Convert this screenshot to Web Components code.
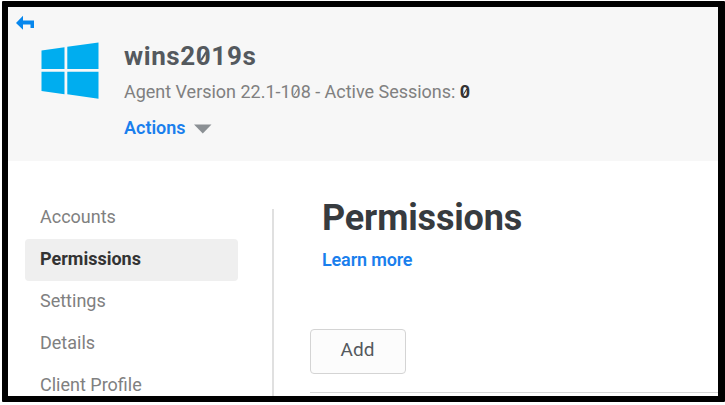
<!DOCTYPE html>
<html lang="en"><head><meta charset="utf-8"><title>wins2019s - Permissions</title>
<style>
body{margin:0;background:#fff;font-family:Roboto,"Liberation Sans",sans-serif;overflow:hidden}
</style></head><body>
<app-frame>
<host-header slot="header"></host-header>
<side-nav>
<nav-item>Accounts</nav-item><nav-item active>Permissions</nav-item><nav-item>Settings</nav-item><nav-item>Details</nav-item><nav-item>Client Profile</nav-item>
</side-nav>
<permissions-panel></permissions-panel>
</app-frame>
<script>
function define(name, html){
  customElements.define(name, class extends HTMLElement{
    constructor(){ super(); this.attachShadow({mode:'open'}).innerHTML = html; }
  });
}
define('app-frame', `<style>
:host{display:flex;flex-direction:column;box-sizing:border-box;width:723px;height:401px;margin:1px 0 0 2px;border:6px solid #000;border-right-width:7px;border-radius:1px;background:#fff;overflow:hidden}
main{display:flex;flex:1;min-height:0}
</style><slot name="header"></slot><main><slot></slot></main>`);
define('slashed-zero', `<style>
:host{position:relative;display:inline}
i{position:absolute;left:50%;top:50%;width:var(--len,8px);height:var(--w,1px);background:currentColor;transform:translate(calc(-50% + var(--dx,0px)),calc(-50% + var(--dy,0px))) rotate(-58deg)}
</style><slot></slot><i></i>`);
define('host-header', `<style>
:host{display:grid;grid-template-columns:18px 84px 1fr;height:154px;flex:none;box-sizing:border-box;padding-left:8px;background:#f7f7f7}
.back{margin-top:8px}.logo{margin:35px 0 0 7px}
svg{display:block}
h1{margin:34px 0 0 6px;font-size:26px;line-height:30px;font-weight:700;color:#54595e;letter-spacing:.6px;--len:10px;--w:2px;--dx:-.3px}
p{margin:10px 0 0 6px;font-size:18px;line-height:22px;color:#808080;letter-spacing:-.02px;--len:7px;--dx:0px}
b{color:#333;font-weight:700;--w:1px}
.act{display:flex;align-items:center;gap:8px;margin:14px 0 0 6px;font-size:18px;line-height:22px;font-weight:600;color:#1a7fed}
.act svg{margin-top:2px}
</style>
<svg class="back" width="19" height="15" viewBox="0 0 19 15"><path d="M0 8L7 .8V5.5H18V13H14.5V9.5H7V14.7Z" fill="#0787ed"/></svg>
<svg class="logo" width="59" height="59" viewBox="0 0 59 59"><path d="M.5 8.5L23.5 5.3V27H.5ZM26.3 4.8L57.5.5V27H26.3ZM.5 29.7H23.5V52.2L.5 49ZM26.3 29.7H57.5V56.7L26.3 52.3Z" fill="#00adef"/></svg>
<div><h1>wins2<slashed-zero>0</slashed-zero>19s</h1>
<p>Agent Version 22.1-1<slashed-zero>0</slashed-zero>8 - Active Sessions: <b><slashed-zero>0</slashed-zero></b></p>
<div class="act"><span>Actions</span><svg width="18" height="10" viewBox="0 0 18 10"><path d="M0 .5H17.5L8.8 9.5Z" fill="#8b9094"/></svg></div></div>`);
define('side-nav', `<style>
:host{display:flex;flex-direction:column;box-sizing:border-box;width:266px;flex:none;padding:36px 36px 0 17px;background:linear-gradient(#e0e0e0,#e0e0e0) right 0 top 48px/2px 100% no-repeat}
</style><slot></slot>`);
define('nav-item', `<style>
:host{display:block;flex:none;height:42px;line-height:39px;padding-left:15px;border-radius:4px;font-size:18px;color:#808080}
:host([active]){background:#efefef;color:#333;font-weight:700}
</style><slot></slot>`);
define('action-button', `<style>
:host{display:block}
button{display:flex;align-items:flex-start;justify-content:center;box-sizing:border-box;width:96px;height:45px;border:1px solid #d4d4d4;border-radius:4px;background:#fcfcfc;color:#54595e;font:19px/39px Roboto,sans-serif;padding:0}
</style><button><slot></slot></button>`);
define('permissions-panel', `<style>
:host{display:block;flex:1;padding:35px 0 0 35.5px}
h2{margin:0 0 0 12.5px;font-size:36px;line-height:44px;font-weight:700;color:#373b3f;letter-spacing:-.15px}
.more{margin:9px 0 0 12.5px;font-size:18px;line-height:22px;font-weight:600;color:#1a7fed;letter-spacing:-.15px}
action-button{margin-top:58px}
hr{margin:18px 0 0;border:0;height:1px;background:#d6d6d6}
</style><h2>Permissions</h2><div class="more">Learn more</div><action-button>Add</action-button><hr>`);
</script></body></html>
